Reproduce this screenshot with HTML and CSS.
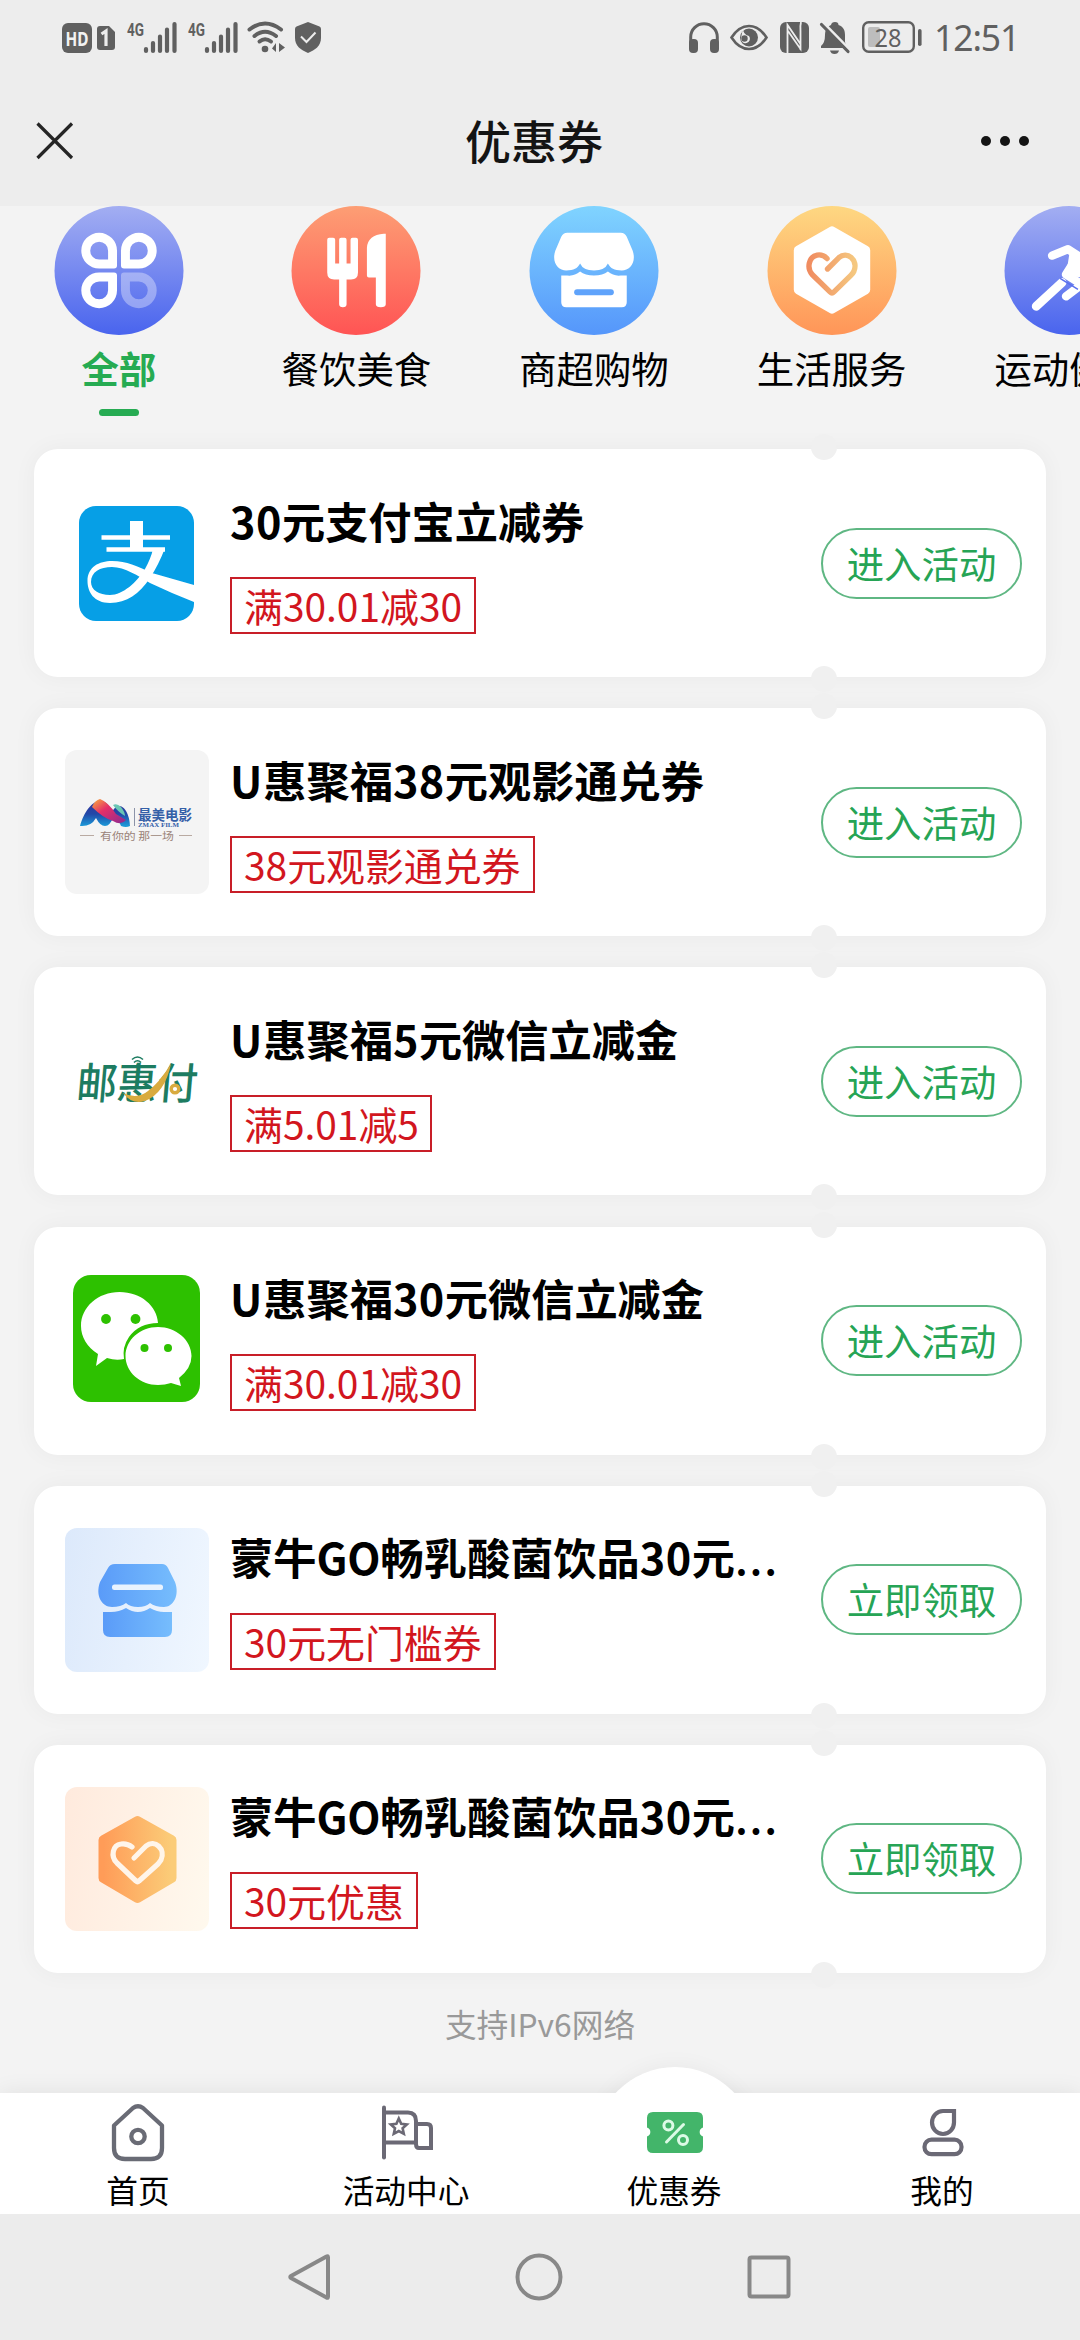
FILE: index.html
```html
<!DOCTYPE html>
<html lang="zh-CN">
<head>
<meta charset="utf-8">
<title>优惠券</title>
<link rel="stylesheet" href="styles.css">
</head>
<body>
<svg class="defs" width="0" height="0" aria-hidden="true">
  <defs>
    <linearGradient id="gIndigo" x1="0" y1="0" x2="0" y2="1"><stop offset="0" stop-color="#a3aef2"/><stop offset="1" stop-color="#4964ee"/></linearGradient>
    <linearGradient id="gRed" x1="0" y1="0" x2="0" y2="1"><stop offset="0" stop-color="#fd9e74"/><stop offset="1" stop-color="#ff5454"/></linearGradient>
    <linearGradient id="gBlue" x1="0" y1="0" x2="0" y2="1"><stop offset="0" stop-color="#80d4ff"/><stop offset="1" stop-color="#5596fb"/></linearGradient>
    <linearGradient id="gOrange" x1="0" y1="0" x2="0" y2="1"><stop offset="0" stop-color="#fed882"/><stop offset="1" stop-color="#ff9558"/></linearGradient>
    <linearGradient id="gHeart" x1="0" y1="0" x2="1" y2="0"><stop offset="0" stop-color="#f08c60"/><stop offset="1" stop-color="#f5c880"/></linearGradient>
    <linearGradient id="gShop" x1="0" y1="0" x2="1" y2="0"><stop offset="0" stop-color="#5a9bf8"/><stop offset="1" stop-color="#76bdfd"/></linearGradient>
    <linearGradient id="gHex" x1="0" y1="0" x2="1" y2="0"><stop offset="0" stop-color="#ff9c58"/><stop offset="1" stop-color="#fbcc78"/></linearGradient>
    <linearGradient id="gFilm" x1="0" y1="0" x2="0" y2="1"><stop offset="0" stop-color="#35329a"/><stop offset=".5" stop-color="#2148a8"/><stop offset="1" stop-color="#1ba0dc"/></linearGradient>
    <linearGradient id="gFilmTop" x1="0" y1="0" x2="1" y2="1"><stop offset="0" stop-color="#f9b23a"/><stop offset=".4" stop-color="#e52f68"/><stop offset="1" stop-color="#8a2a94"/></linearGradient>
    <path id="petal" d="M18 0A18 18 0 1 0 18 36H33Q36 36 36 33V18A18 18 0 0 0 18 0ZM18 9A9 9 0 0 1 27 18V27H18A9 9 0 0 1 18 9Z" fill-rule="evenodd"/>
  </defs>
</svg>

<div class="status">
  <div class="status-group">
    <svg class="ic-hd" width="30" height="30" viewBox="0 0 30 30"><rect width="30" height="30" rx="6" fill="#606060"/><text x="15" y="22.5" text-anchor="middle" class="hd-text" textLength="23" lengthAdjust="spacingAndGlyphs">HD</text></svg>
    <svg class="ic-sim" width="18" height="24" viewBox="0 0 18 24"><path d="M3 0H12L18 6V21Q18 24 15 24H3Q0 24 0 21V3Q0 0 3 0Z" fill="#606060"/><path d="M4.5 8L9 5V20" fill="none" stroke="#ededed" stroke-width="3.2"/></svg>
    <svg class="ic-sig1" width="50" height="32" viewBox="0 0 50 32"><text x="0" y="15" class="net-text" textLength="17" lengthAdjust="spacingAndGlyphs">4G</text><path d="M19 28V30M26 22V30M33 15.500V30M40 8.500V30M47.500 3V30" stroke="#606060" stroke-width="4.200" stroke-linecap="round"/></svg>
    <svg class="ic-sig2" width="50" height="32" viewBox="0 0 50 32"><text x="0" y="15" class="net-text" textLength="17" lengthAdjust="spacingAndGlyphs">4G</text><path d="M19 28V30M26 22V30M33 15.500V30M40 8.500V30M47.500 3V30" stroke="#606060" stroke-width="4.200" stroke-linecap="round"/></svg>
    <svg class="ic-wifi" width="38" height="32" viewBox="0 0 38 32"><g fill="none" stroke="#606060" stroke-width="4" stroke-linecap="round"><path d="M2.500 8.500Q18 -3.500 34 8.500"/><path d="M7.500 15Q18 6.500 29 15"/><path d="M12.500 20.500Q18 16 24 20.500"/></g><circle cx="18" cy="28" r="3.300" fill="#606060"/><path d="M29 22V31L25 27.500ZM32 22V31L38 26.500Z" fill="#606060"/></svg>
    <svg class="ic-shield" width="26" height="31" viewBox="0 0 26 31"><path d="M13 0L24.500 4.500Q26 5.200 26 7V16C26 24 20 28 13 31C6 28 0 24 0 16V7Q0 5.200 1.500 4.500Z" fill="#606060"/><path d="M6 14.500L11.500 20L20.500 10.500" fill="none" stroke="#ededed" stroke-width="2"/></svg>
  </div>
  <div class="status-group">
    <svg class="ic-head" width="30" height="31" viewBox="0 0 30 31"><path d="M1.700 25V15A13.300 13.300 0 0 1 28.300 15V25" fill="none" stroke="#606060" stroke-width="3"/><rect x="0" y="17" width="9" height="14" rx="4" fill="#606060"/><rect x="21" y="17" width="9" height="14" rx="4" fill="#606060"/></svg>
    <svg class="ic-eye" width="38" height="27" viewBox="0 0 38 27"><path d="M1.500 13.500Q9 2 19 2T36.500 13.500Q29 25 19 25T1.500 13.500Z" fill="none" stroke="#606060" stroke-width="2.600"/><circle cx="19" cy="13.500" r="9" fill="#606060"/><path d="M13 4A8 8 0 0 0 19 12A4.500 4.500 0 1 1 11 14Z" fill="#ededed"/><circle cx="14.500" cy="14.500" r="3.200" fill="#606060"/></svg>
    <svg class="ic-nfc" width="29" height="31" viewBox="0 0 29 31"><rect width="29" height="31" rx="6" fill="#606060"/><path d="M7.500 31V3L20.500 22V9M7.500 8V31M20.500 22V27L8 9M21 0Q20 4 20.500 9V28" fill="none" stroke="#ededed" stroke-width="1.800"/></svg>
    <svg class="ic-bell" width="30" height="32" viewBox="0 0 30 32"><path d="M11 3Q11.500 0 15 0T18.500 3C24 5 25 9 25 13V20L27 26H1V24Q5 21 5 13C5 8 7 5 11 3Z" fill="#606060"/><path d="M10 28.500H19Q18 32 14.500 32T10 28.500Z" fill="#606060"/><path d="M2.500 0L30 28" stroke="#ededed" stroke-width="3"/><path d="M1.500 2.500L28 29.500" stroke="#606060" stroke-width="3.200" stroke-linecap="round"/></svg>
    <svg class="ic-batt" width="60" height="32" viewBox="0 0 60 32"><rect x="1.200" y="1.200" width="50.600" height="29.600" rx="5.500" fill="none" stroke="#606060" stroke-width="2.400"/><rect x="6" y="6" width="12" height="20" rx="2" fill="#bdbdbd"/><rect x="56" y="8" width="3.600" height="17" rx="1.800" fill="#606060"/><text x="26" y="25.500" text-anchor="middle" class="batt-text" textLength="27" lengthAdjust="spacingAndGlyphs">28</text></svg>
    <span class="clock">12:51</span>
  </div>
</div>

<header class="header">
  <svg class="close" width="38" height="38" viewBox="0 0 38 38"><path d="M1.500 1.500L36 36M36 1.500L1.500 36" stroke="#252525" stroke-width="3.200"/></svg>
  <h1 class="header-title">优惠券</h1>
  <svg class="more" width="48" height="10" viewBox="0 0 48 10"><circle cx="5" cy="5" r="5"/><circle cx="24" cy="5" r="5"/><circle cx="43" cy="5" r="5"/></svg>
</header>

<nav class="cats">
  <div class="cat cat-active">
    <svg class="cat-icon" viewBox="0 0 130 130"><circle cx="65" cy="65" r="65" fill="url(#gIndigo)"/><g fill="#fff"><use href="#petal" x="27" y="27"/><use href="#petal" transform="translate(103 27) scale(-1 1)"/><use href="#petal" transform="translate(27 103) scale(1 -1)"/><use href="#petal" transform="translate(103 103) scale(-1 -1)" opacity=".35"/></g></svg>
    <span class="cat-name">全部</span>
    <i class="cat-line"></i>
  </div>
  <div class="cat">
    <svg class="cat-icon" viewBox="0 0 130 130"><circle cx="65" cy="65" r="65" fill="url(#gRed)"/><path d="M36 34Q36 32 38 32H42Q44 32 44 34V58H48V34Q48 32 50 32H53.500Q55.500 32 55.500 34V58H59.500V34Q59.500 32 61.500 32H65Q67 32 67 34V67Q67 74 60 74H55.500V99Q55.500 102 51.800 102T48 99V74H43Q36 74 36 67ZM95 28V99Q95 102 90 102T85 99V72H78Q76 72 76 70V42Q77 29 93 28Z" fill="#fff"/></svg>
    <span class="cat-name">餐饮美食</span>
  </div>
  <div class="cat">
    <svg class="cat-icon" viewBox="0 0 130 130"><circle cx="65" cy="65" r="65" fill="url(#gBlue)"/><path d="M38 27H92Q96 27 98 31L104 45C108 57 101 65 93 65C85 65 82 63 79 58Q76 65 65 65T51 58C48 63 45 65 37 65C29 65 22 57 26 45L32 31Q34 27 38 27Z" fill="#fff"/><path d="M32 70H38Q45 71 51 66Q56 70 65 70T79 66Q85 71 92 70H98V97Q98 102 93 102H37Q32 102 32 97Z" fill="#fff"/><rect x="45" y="84" width="40" height="6" rx="3" fill="#5fa3fb"/></svg>
    <span class="cat-name">商超购物</span>
  </div>
  <div class="cat">
    <svg class="cat-icon" viewBox="0 0 130 130"><circle cx="65" cy="65" r="65" fill="url(#gOrange)"/><path d="M65 25L99 44.500V84.500L65 104L31 84.500V44.500Z" fill="#fff" stroke="#fff" stroke-width="9" stroke-linejoin="round"/><path d="M60.500 63.500L72 52C80 45 92 54 87 66Q86 68 84 70L67 86.500Q65 88.500 63 86.500L45 69C39 62 42 51 50 49.500Q56 48.500 60 53" fill="none" stroke="url(#gHeart)" stroke-width="5.400" stroke-linecap="round" stroke-linejoin="round"/></svg>
    <span class="cat-name">生活服务</span>
  </div>
  <div class="cat">
    <svg class="cat-icon" viewBox="0 0 130 130"><circle cx="65" cy="65" r="65" fill="url(#gIndigo)"/><g fill="none" stroke="#fff" stroke-linecap="round" stroke-linejoin="round"><path d="M48 50L64 43.500L74 50L62 69L78 79L62 91" stroke-width="8.500"/><path d="M32 101L58 77" stroke-width="9"/></g><path d="M66 44L84 50L78 72L62 70Z" fill="#fff"/><path d="M56 73L74 84" stroke="#5a70ee" stroke-width="1.500"/></svg>
    <span class="cat-name">运动健身</span>
  </div>
</nav>

<main class="list">
  <section class="card">
    <div class="thumb thumb-pay">
      <svg width="115" height="115" viewBox="0 0 115 115"><rect width="115" height="115" rx="17" fill="#069fe6"/><g fill="none" stroke="#fff"><path d="M22.500 31.500H91" stroke-width="4.500"/><path d="M27.500 43.500H86" stroke-width="4.500"/><path d="M57.500 15V44" stroke-width="13"/></g><path d="M74 43L86 42Q80 58 71 72C60 88 48 97 31 97C15 97 8.500 86 8.500 75C8.500 61 20 55 33 55C48 55 58 60 73 67L115 79V96Q92 87 71 77C59 70 46 61 33 61C21 61 12 66 12 76C12 84 20 89 31 89C44 89 58 76 66 63Q72 52 74 43Z" fill="#fff"/></svg>
    </div>
    <div class="info"><h2 class="title"><span class="num">30</span>元支付宝立减券</h2><span class="tag">满30.01减30</span></div>
    <button class="btn">进入活动</button>
  </section>
  <section class="card">
    <div class="thumb thumb-gray">
      <svg width="144" height="144" viewBox="0 0 144 144"><path d="M15 76C19 62 27 51 35 51C43 51 45 58 47 62Q50 56 54 56C61 56 65 68 65 76Q61 78 56 76Q53 68 49 66Q45 76 40 76Q35 76 31 68Q26 77 15 76Z" fill="url(#gFilm)"/><path d="M27 57Q30 50 35 49Q43 52 51 64L61 70Q56 76 48 71Q38 68 27 57Z" fill="url(#gFilmTop)"/><path d="M48 55Q52 53 56 57Q60 62 60 66Q53 62 48 55Z" fill="#69c6b4"/><path d="M69.500 58V76" stroke="#8c93a8" stroke-width="1"/><text x="73" y="69.500" class="film-cn" textLength="54" lengthAdjust="spacingAndGlyphs">最美电影</text><text x="73" y="76.500" class="film-en" textLength="41" lengthAdjust="spacingAndGlyphs">ZMAX FILM</text><path d="M15 85.500H29M114 85.500H127" stroke="#b9aaa2" stroke-width="1.200"/><text x="35" y="89.500" class="film-sub" textLength="74" lengthAdjust="spacingAndGlyphs">有你的 那一场</text></svg>
    </div>
    <div class="info"><h2 class="title"><span class="cap">U</span>惠聚福<span class="num">38</span>元观影通兑券</h2><span class="tag">38元观影通兑券</span></div>
    <button class="btn">进入活动</button>
  </section>
  <section class="card">
    <div class="thumb">
      <svg width="144" height="144" viewBox="0 0 144 144"><g transform="translate(10.500 90) skewX(-5)"><text x="0" y="0" class="yhf" textLength="121" lengthAdjust="spacingAndGlyphs">邮惠付</text></g><path d="M106 55Q100 84 80 92Q67 96 58 84Q72 91 83 82Q95 73 106 55Z" fill="#d9ab3f"/><circle cx="110" cy="80" r="3.800" fill="#fff" stroke="#d9ab3f" stroke-width="3.400"/><g fill="none" stroke="#1d7c61" stroke-width="1.600"><path d="M67 50.500Q72.500 45.500 78 50.500M69 53.500Q72.500 50 76 53.500"/></g><circle cx="72.500" cy="56.500" r="1.600" fill="#1d7c61"/></svg>
    </div>
    <div class="info"><h2 class="title"><span class="cap">U</span>惠聚福<span class="num">5</span>元微信立减金</h2><span class="tag tag-tight">满5.01减5</span></div>
    <button class="btn">进入活动</button>
  </section>
  <section class="card">
    <div class="thumb thumb-chat">
      <svg width="127" height="127" viewBox="0 0 127 127"><rect width="127" height="127" rx="18" fill="#2dc100"/><path d="M46.500 17C68 17 84 31 85 48Q66 48 56 62Q49 72 51 84Q43 86 34 83L23 91L25 79C14 72 8 62 8 51C8 32 25 17 46.500 17Z" fill="#fff"/><path d="M85 52C103 52 118.500 65 118.500 81Q118.500 93 106 103L108 111L98 108Q92 110 85 110C67 110 52.500 97 52.500 81C52.500 65 67 52 85 52Z" fill="#fff"/><g fill="#2dc100"><circle cx="33" cy="44" r="4.900"/><circle cx="62.500" cy="44" r="4.900"/><circle cx="71.500" cy="73" r="4"/><circle cx="95" cy="73" r="4"/></g></svg>
    </div>
    <div class="info"><h2 class="title"><span class="cap">U</span>惠聚福<span class="num">30</span>元微信立减金</h2><span class="tag">满30.01减30</span></div>
    <button class="btn">进入活动</button>
  </section>
  <section class="card">
    <div class="thumb thumb-blue">
      <svg width="144" height="144" viewBox="0 0 144 144"><g fill="url(#gShop)"><path d="M50 36H97Q101 36 103 40L110 54C115 68 108 79 99 79Q90 79 85 75Q81 79 73 79T61 75Q56 79 47 79C37 79 30 68 35 54L43 40Q45 36 50 36Z"/><path d="M38 84H46Q54 84 61 80Q67 84 73 84T85 80Q92 84 99 84H107V102Q107 109 100 109H45Q38 109 38 102Z"/></g><rect x="47" y="56.500" width="51" height="5.500" rx="2.500" fill="#e9f3fe"/></svg>
    </div>
    <div class="info"><h2 class="title">蒙牛GO畅乳酸菌饮品<span class="num">30</span>元<span class="dots">...</span></h2><span class="tag">30元无门槛券</span></div>
    <button class="btn">立即领取</button>
  </section>
  <section class="card">
    <div class="thumb thumb-orange">
      <svg width="144" height="144" viewBox="0 0 144 144"><path d="M72.500 34L106.500 53V91L72.500 111L38.500 91V53Z" fill="url(#gHex)" stroke="url(#gHex)" stroke-width="10" stroke-linejoin="round"/><path d="M69 71L81 59C90 52 101 62 96 73L93 77L74 94Q72.500 95.500 71 94L52 76C45 69 48 58 56 57Q62 56 67 60" fill="none" stroke="#fff5ea" stroke-width="5.200" stroke-linecap="round" stroke-linejoin="round"/></svg>
    </div>
    <div class="info"><h2 class="title">蒙牛GO畅乳酸菌饮品<span class="num">30</span>元<span class="dots">...</span></h2><span class="tag">30元优惠</span></div>
    <button class="btn">立即领取</button>
  </section>
</main>

<p class="support">支持IPv6网络</p>

<footer class="tabs">
  <div class="tab"><svg width="60" height="60" viewBox="0 0 60 60" fill="none" stroke="#696b75" stroke-width="4.300" stroke-linejoin="round"><path d="M25 6Q30 2.500 35 6L54 23.500V46Q54 57 43 57H17Q6 57 6 46V23.500Z"/><circle cx="30" cy="34.500" r="6.700"/></svg><span>首页</span></div>
  <div class="tab"><svg width="60" height="60" viewBox="0 0 60 60" fill="none" stroke="#6b6975" stroke-width="4"><path d="M8 5.500V55.500" stroke-linecap="round"/><path d="M8 10.500H32Q40 10.500 40 19V40.500H8"/><path d="M40 22H51Q55 22 55 26V46H43Q40 46 40 42"/><path d="M22.800 16.500L25.200 21.800L30.800 22.400L26.600 26.200L27.800 31.800L22.800 29L17.800 31.800L19 26.200L14.800 22.400L20.400 21.800Z" stroke-width="2.600"/></svg><span>活动中心</span></div>
  <div class="tab"><svg width="60" height="60" viewBox="0 0 60 60"><path d="M9 10H53Q59 10 59 16V25.500A4.700 4.700 0 0 0 59 34.500V45Q59 51 53 51H9Q3 51 3 45V34.500A4.700 4.700 0 0 0 3 25.500V16Q3 10 9 10Z" fill="#43b56a"/><g fill="none" stroke="#dcfae6" stroke-width="3"><circle cx="24.400" cy="23.500" r="4.500"/><circle cx="39" cy="38" r="4.500"/><path d="M22.500 40L39.500 22.500" stroke-linecap="round"/></g></svg><span>优惠券</span></div>
  <div class="tab"><svg width="60" height="60" viewBox="0 0 60 60" fill="none" stroke="#6b6975" stroke-width="4.200"><path d="M42 9H31A11 11.500 0 1 0 42 20.500Z"/><rect x="12.500" y="37.700" width="37" height="14.500" rx="7"/></svg><span>我的</span></div>
</footer>

<div class="sysnav">
  <svg width="42" height="48" viewBox="0 0 42 48"><path d="M38.500 3.500Q40 2.500 40 4.500V43.500Q40 45.500 38.500 44.500L3 25Q1.500 24 3 23Z"/></svg>
  <svg width="48" height="48" viewBox="0 0 48 48"><circle cx="24" cy="24" r="21.500"/></svg>
  <svg width="44" height="48" viewBox="0 0 44 48"><rect x="2.500" y="4.500" width="39" height="39" rx="2"/></svg>
</div>
</body>
</html>
```
FILE: styles.css
```css
* { box-sizing: border-box; margin: 0; padding: 0; }

body {
  width: 1080px;
  height: 2340px;
  display: flex;
  flex-direction: column;
  overflow: hidden;
  background: #f3f3f3;
  color: #000;
  font-family: "Noto Sans CJK SC", sans-serif;
}
svg { display: block; flex: none; overflow: visible; }
.defs { height: 0; position: absolute; }

/* system status bar */
.status {
  height: 75px;
  flex: none;
  display: flex;
  justify-content: space-between;
  align-items: flex-start;
  padding: 21px 66px 0 62px;
  background: #ededed;
}
.status-group { display: flex; align-items: flex-start; }
.ic-hd { margin-top: 2px; }
.ic-sim { margin: 5px 12px 0 5px; }
.ic-sig2 { margin-left: 11px; }
.ic-wifi { margin-left: 9px; }
.ic-shield { margin: 1px 0 0 10px; }
.ic-head { margin-top: 1px; }
.ic-eye { margin: 3px 0 0 11px; }
.ic-nfc { margin: 1px 0 0 12px; }
.ic-bell { margin: 1px 0 0 11px; }
.ic-batt { margin: 0 12px 0 12px; }
.hd-text { font: 700 20px "Noto Sans", sans-serif; fill: #f2f2f2; }
.net-text { font: 700 19px Roboto, sans-serif; fill: #606060; }
.batt-text { font: 400 26px "Noto Sans", sans-serif; fill: #606060; }
.clock {
  font: 400 35.5px/33px "Noto Sans", sans-serif;
  color: #606060;
  letter-spacing: -1.1px;
  width: 80px;
  white-space: nowrap;
}

/* page header */
.header {
  height: 131px;
  flex: none;
  display: grid;
  grid-template-columns: 200px 1fr 200px;
  align-items: center;
  padding: 0 51px 0 36px;
  background: #ededed;
}
.header-title { font-size: 46px; font-weight: 500; line-height: 60px; text-align: center; color: #141414; padding: 0 0 3px 3px; }
.more { justify-self: end; fill: #141414; }

/* category strip */
.cats { height: 243px; flex: none; display: flex; width: 1080px; overflow: hidden; }
.cat { flex: 0 0 22%; display: flex; flex-direction: column; align-items: center; }
.cat-icon { width: 130px; height: 129px; }
.cat-name { font-size: 37.4px; line-height: 54px; margin-top: 6px; white-space: nowrap; }
.cat-active .cat-name { color: #26ab52; font-weight: 700; }
.cat-line { width: 40px; height: 7px; border-radius: 4px; background: #26ab52; margin-top: 14px; }

/* coupon list */
.list { display: flex; flex-direction: column; gap: 31.2px; padding: 0 34px; flex: none; }
.card {
  position: relative;
  height: 228px;
  display: flex;
  align-items: center;
  padding: 0 24px 0 31px;
  border-radius: 24px;
  background: #fff;
  box-shadow: 0 0 24px rgba(0, 0, 0, .045);
}
/* ticket notches on the top and bottom edge */
.card::before, .card::after {
  content: "";
  position: absolute;
  left: 777px;
  width: 26px;
  height: 26px;
  border-radius: 50%;
  background: #f0f0f0;
}
.card::before { top: -15px; }
.card::after { bottom: -15px; }
.thumb { width: 144px; height: 144px; flex: none; display: flex; align-items: center; justify-content: center; border-radius: 12px; }
.thumb-pay { padding-right: 2px; }
.thumb-chat { padding: 0 1px 4px 0; }
.thumb-gray { background: #f4f4f4; }
.thumb-blue { background: linear-gradient(100deg, #dce9fb, #f0f7ff); }
.thumb-orange { background: linear-gradient(100deg, #ffeadd, #fff9ee); }
.info { flex: 1; min-width: 0; padding-left: 21px; display: flex; flex-direction: column; align-items: flex-start; }
.title { font-size: 43.2px; font-weight: 700; line-height: 60px; margin: -3px 0 27px; white-space: nowrap; }
.cap { letter-spacing: 1px; }
.num { letter-spacing: .5px; }
.dots { font-weight: 500; letter-spacing: 1.8px; }
.tag {
  height: 57px;
  line-height: 53px;
  padding: 0 12px;
  border: 2px solid #c81e28;
  color: #d2161e;
  font-size: 38.9px;
  white-space: nowrap;
}
.tag-tight { padding-right: 11px; }
.btn {
  width: 201px;
  height: 71px;
  flex: none;
  border: 2px solid #5fb783;
  border-radius: 36px;
  background: #fff;
  color: #26a455;
  font: 400 37.4px/65px "Noto Sans CJK SC", sans-serif;
  white-space: nowrap;
}
.film-cn { font: 700 14px "Noto Sans CJK SC", sans-serif; fill: #3560a8; }
.film-en { font: 700 7px "Liberation Serif", serif; fill: #3560a8; }
.film-sub { font: 400 10px "Noto Sans CJK SC", serif; fill: #9a8378; }
.yhf { font: 500 43px "Noto Sans CJK SC", sans-serif; fill: #1d7c61; }

.support { flex: 1; text-align: center; color: #999; font-size: 31.7px; line-height: 46px; padding-top: 27px; }

/* bottom tabs */
.tabs {
  position: relative;
  height: 121px;
  flex: none;
  display: flex;
  padding: 0 4px;
  background: #fff;
  box-shadow: 0 0 22px rgba(0, 0, 0, .08);
}
.tabs::before {
  content: "";
  position: absolute;
  left: 594px;
  top: -26px;
  width: 162px;
  height: 100px;
  border-radius: 81px 81px 0 0;
  background: #fff;
  box-shadow: 0 0 22px rgba(0, 0, 0, .05);
  clip-path: inset(-30px -30px 74px -30px);
}
.tab { position: relative; flex: 1; display: flex; flex-direction: column; align-items: center; padding-top: 9px; }
.tab span { font-size: 31.7px; line-height: 46px; margin-top: 4px; }

/* system navigation */
.sysnav {
  position: relative;
  height: 126px;
  flex: none;
  display: flex;
  justify-content: space-between;
  align-items: center;
  padding: 0 289px 0 288px;
  background: #ececec;
}
.sysnav svg { fill: none; stroke: #888; stroke-width: 4; stroke-linejoin: round; }
```
